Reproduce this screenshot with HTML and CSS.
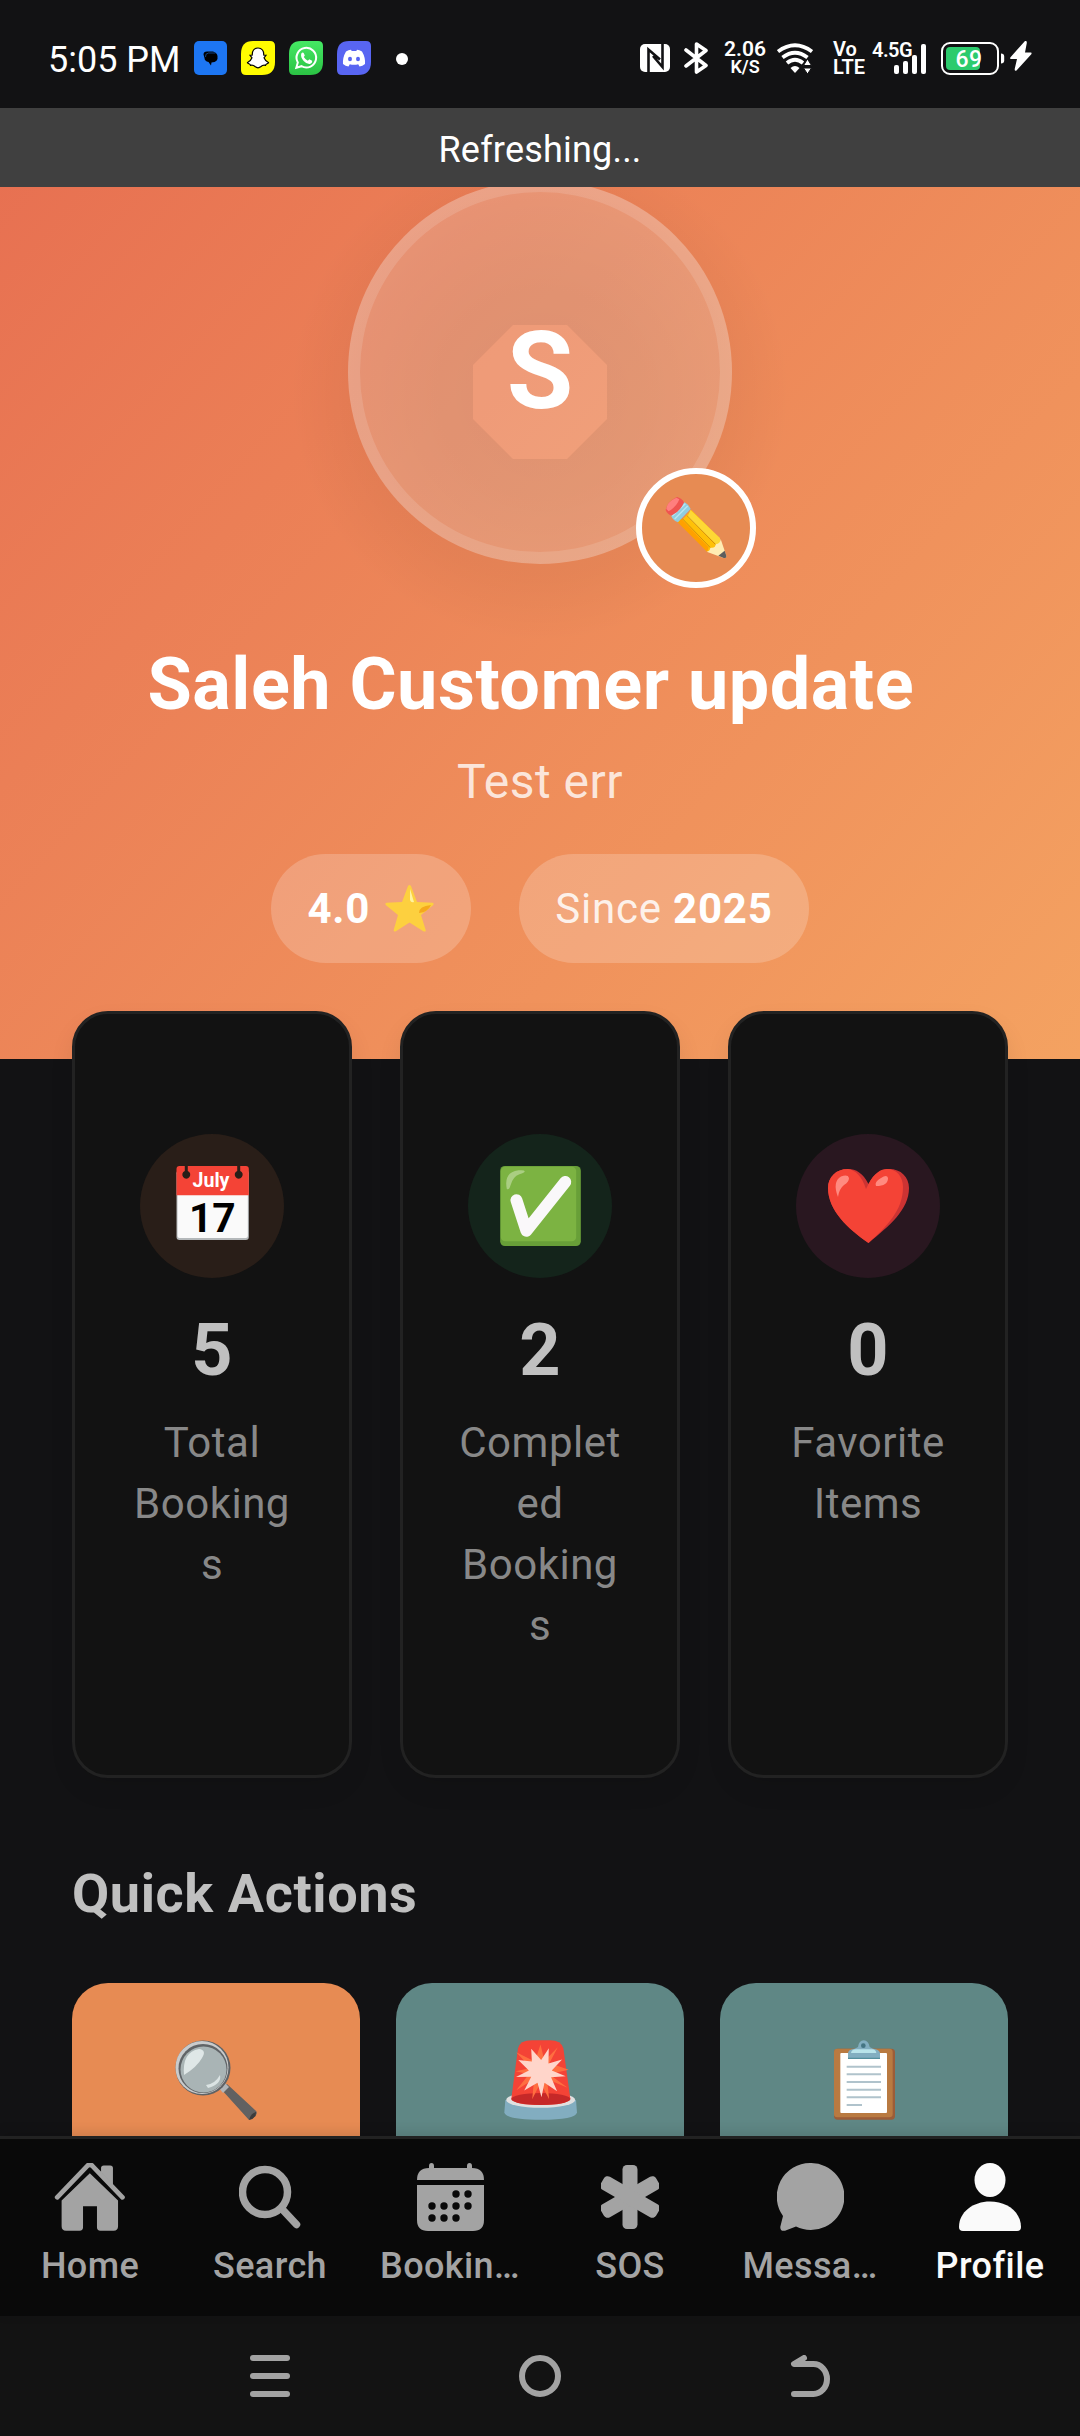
FILE: index.html
```html
<!DOCTYPE html>
<html lang="en">
<head>
<meta charset="utf-8">
<title>Profile</title>
<link rel="stylesheet" href="styles.css">
</head>
<body>
<div class="app">
  <header class="status">
    <span class="time">5:05 PM</span>
    <div class="notifs">
      <svg width="33" height="34" viewBox="0 0 33 34"><rect width="33" height="34" rx="5" fill="#1d76f3"/><path d="M9.500 13.500q0-3 3.500-3h6q4 1 4.500 4.500 1 6-6 6.500l-.5 3-2.500-3.500q-4-1-4-4z" fill="#000"/><path d="M11.500 16q-.5-3.500 3-4h7" fill="none" stroke="#1550a0" stroke-width=".8"/></svg>
      <svg width="34" height="34" viewBox="0 0 34 34"><path d="M12 0h17q5 0 5 5v16q0 13-13 13H5q-5 0-5-5V13Q0 0 12 0z" fill="#fffc00"/><path d="M17 7c-4 0-6 3-5.700 7l-2.300.3 2 2.500c-1 2.500-2.500 4-4.500 4.700.5 1.500 2.500 1 3 2.800 2-.5 3.500.2 4.500 1.200 2 1.700 4 1.700 6 0 1-1 2.500-1.700 4.500-1.200.5-1.800 2.500-1.300 3-2.800-2-.7-3.500-2.200-4.500-4.700l2-2.500-2.300-.3C23 10 21 7 17 7z" fill="#fff" stroke="#000" stroke-width="1.200"/></svg>
      <svg width="34" height="34" viewBox="0 0 34 34"><defs><linearGradient id="wa" x2="0" y2="1"><stop stop-color="#45e864"/><stop offset="1" stop-color="#2bc244"/></linearGradient></defs><path d="M12 0h17q5 0 5 5v16q0 13-13 13H5q-5 0-5-5V13Q0 0 12 0z" fill="url(#wa)"/><path d="M7.300 26.700l1.500-5.200a9.800 9.800 0 1 1 3.700 3.700z" fill="none" stroke="#fff" stroke-width="2"/><path d="M12.300 12.500q1.500-1.800 2.500-.3l1 2.400-1 1.500q1.500 2.500 4 3.700l1.500-1.500 2.800 1.400q.5 2.500-2.400 3.200-3 .3-6-3-3.500-3.700-2.400-7.400z" fill="#fff"/></svg>
      <svg width="34" height="34" viewBox="0 0 34 34"><path d="M12 0h17q5 0 5 5v16q0 13-13 13H5q-5 0-5-5V13Q0 0 12 0z" fill="#5865f2"/><path d="M9 10.500q2.500-1.500 5-1.800l.7 1.300h4.600l.7-1.300q2.500.3 5 1.800 3.500 6 3 12.500-2.500 2-5.500 2.500l-1.300-2.300q-4.200 1.200-8.400 0l-1.300 2.300Q8.500 25 6 23q-.5-6.500 3-12.500z" fill="#fff"/><ellipse cx="13" cy="18" rx="2" ry="2.200" fill="#5865f2"/><ellipse cx="21" cy="18" rx="2" ry="2.200" fill="#5865f2"/></svg>
      <i class="dot"></i>
    </div>
    <div class="system">
      <svg class="nfc" width="30" height="28" viewBox="0 0 30 28"><rect width="30" height="28" rx="5" fill="#fff"/><path d="M8.500 28V5.500L20 15.500M13 12l9.500 11V0" fill="none" stroke="#121214" stroke-width="2.600"/></svg>
      <svg class="bt" width="25" height="32" viewBox="0 0 25 32"><path d="M2 8l20 15.500-9.500 6.500V2L22 8.500 2 24" fill="none" stroke="#fff" stroke-width="3.600" stroke-linejoin="round" stroke-linecap="round"/></svg>
      <span class="duo speed"><b>2.06</b><b class="unit">K/S</b></span>
      <svg class="wifi" width="36" height="31" viewBox="0 0 36 31"><g fill="none" stroke="#fff" stroke-width="3.800"><path d="M1 8.500q17-12.500 34 0M5.500 14.500q12.500-9.500 25 0M10 20q8-6.500 16 0"/></g><path d="M13.500 25q4.500-4 9 0L18 30z" fill="#fff"/><path d="M30.500 16l4 6.500h-8zM30.500 31l4-6h-8z" fill="#fff" stroke="#121214" stroke-width="1"/></svg>
      <span class="duo volte"><b>Vo</b><b>LTE</b></span>
      <span class="signal"><b>4.5G</b><svg width="32" height="30" viewBox="0 0 32 30" fill="#fff"><rect y="21" width="5" height="9" rx="2"/><rect x="9" y="17" width="5" height="13" rx="2"/><rect x="18" y="11" width="5" height="19" rx="2"/><rect x="27" y="0" width="5" height="30" rx="2"/></svg></span>
      <svg class="battery" width="64" height="33" viewBox="0 0 64 33"><rect x="1" y="1" width="56" height="31" rx="8" fill="none" stroke="#fff" stroke-width="2"/><path d="M9 5h26q4 0 4 4v15q0 4-4 4H9q-4 0-4-4V9q0-4 4-4z" fill="#2ccb6d"/><path d="M60 11.500q3.200 0 3.200 3v4q0 3-3.200 3z" fill="#fff"/><text x="28" y="25" text-anchor="middle" class="pct">69</text></svg>
      <svg class="bolt" width="22" height="30" viewBox="0 0 22 30"><path d="M15 0q2-.5 1.800 2L15 11.500h6q1 .5.300 1.800L6.500 29.500q-2 .7-1.800-1.500L7 18H.8q-1.200-.5-.3-1.800z" fill="#fff"/></svg>
    </div>
  </header>

  <main class="screen">
    <div class="refresh">Refreshing...</div>

    <section class="hero">
      <div class="avatar">
        <span class="initial">S</span>
        <div class="edit">
          <svg width="62" height="62" viewBox="1036 952 186 186"><path d="M1089 1019l26-28 82 82 6 33-40 10-88-90z" fill="#ffc107"/><path d="M1112 991l89 84 1 18-10 3-88-84z" fill="#fdd835"/><path d="M1071 1025l14-8 82 86-4 14z" fill="#ffa000"/><path d="M1088 1017l84 87M1102 1008l86 87" stroke="#bf7512" stroke-width="2" fill="none"/><path d="M1203 1078l17 50q1 8-8 7l-51-19q10-2 11-12 15 3 16-10 14-1 15-16z" fill="#ffecb3"/><path d="M1215 1113l5 15q1 8-8 7l-16-7z" fill="#5d5d5d"/><path d="M1053 1006l42-38q13 7 18 20l-38 40q-15-5-22-22z" fill="#90cde0"/><path d="M1065 1018l39-39M1058 1009l39-37" stroke="#b7e7f2" stroke-width="4"/><path d="M1038 991q5-25 34-39 13 3 21 16-10 27-38 40-12-4-17-17z" fill="#ef5350"/><path d="M1040 988q2-22 30-34l9 5q-8 22-32 36z" fill="#ff7f7e"/></svg>
        </div>
      </div>
      <h1 class="name">Saleh Customer update&nbsp;</h1>
      <p class="bio">Test err</p>
      <div class="pills">
        <span class="pill"><b>4.0</b><svg class="star" width="49" height="47" viewBox="0 0 49 47"><path d="M23 1q1.500-2 3 0l6 16 15.500.7q2 .8.500 2.500L36 30l4.700 15q.3 2-2 1.500L24.500 37.500 10.500 46.500q-2 .5-1.800-1.500L13 30 1 20.200q-1.500-1.700.5-2.500L17 17z" fill="#fdd03f"/><path d="M25 4l4 13q-3 1-4-2z" fill="#fff3a0"/><path d="M46 20q-3 7-12 8 0-7 12-8z" fill="#f5a91c"/></svg></span>
        <span class="pill">Since&nbsp;<b>2025</b></span>
      </div>
    </section>

    <section class="stats">
      <article class="stat">
        <div class="badge amber"><svg width="73" height="74" viewBox="135 107 219 223"><rect x="136" y="120" width="218" height="210" rx="9" fill="#b4b8ba"/><rect x="139" y="160" width="212" height="164" rx="6" fill="#fafafa"/><path d="M136 195v-79q0-9 9-9h200q9 0 9 9v79z" fill="#f44336"/><path d="M161 107h9v15a12 12 0 1 1-9 0zM319 107h9v15a12 12 0 1 1-9 0z" fill="#291e18"/><text x="240" y="171" text-anchor="middle" class="cal-month">July</text><text x="244" y="306" text-anchor="middle" class="cal-day">17</text></svg></div>
        <strong class="num">5</strong>
        <span class="label">Total Bookings</span>
      </article>
      <article class="stat">
        <div class="badge green"><svg width="81" height="80" viewBox="1107 107 243 241"><rect x="1107" y="107" width="243" height="241" rx="14" fill="#689f38"/><rect x="1109" y="109" width="227" height="225" rx="13" fill="#7cb342"/><path d="M1127 176q-10-50 35-56 18-2 19 3 0 4-16 9-20 7-27 34-4 15-11 10z" fill="#aace82"/><path d="M1156 210l30 92 117-147" fill="none" stroke="#faf8fa" stroke-width="36" stroke-linecap="round" stroke-linejoin="round"/></svg></div>
        <strong class="num">2</strong>
        <span class="label">Completed Bookings</span>
      </article>
      <article class="stat">
        <div class="badge rose"><svg width="81" height="74" viewBox="0 0 81 74"><path d="M40.500 15C46 4 54 0 61 0c12 0 20 8 20 19 0 22-20 38-40.500 55C20 60 0 41 0 19 0 8 8 0 20 0c8 0 15 4 20.500 15z" fill="#cc3333"/><path d="M38 20l2.500-5C46 4 53 0 59 0c10 0 16 8 16 18 0 24-17 40-34.500 56C20 60 0 41 0 19 0 8 8 0 20 0c7 1 14 7 18 20z" fill="#f44336"/><path d="M10 28Q4 13 13 7.500 20 5 21 9q0 4-5 7-5 4-6 12zM48 17q-2-4 5-8 6-4 7 0 0 8-12 8z" fill="#ff8a80"/></svg></div>
        <strong class="num">0</strong>
        <span class="label">Favorite Items</span>
      </article>
    </section>

    <h2 class="title">Quick Actions</h2>
    <section class="tiles">
      <article class="tile orange"><svg width="82" height="80" viewBox="0 0 82 80"><path d="M46 49l6-5 28 26q3 2 1 5-3 4-7 5z" fill="#616161"/><path d="M74 80q2-7 7-8l-.5 4q-2 3-6.500 4z" fill="#3c3c3c"/><path d="M44 48l6-5 4 4-6 6z" fill="#b0b4b8"/><circle cx="28" cy="28" r="27.500" fill="#5e6265"/><circle cx="27" cy="27.500" r="26.500" fill="#c9cbcc"/><circle cx="28" cy="28.500" r="24.500" fill="#606467"/><circle cx="28.500" cy="29.500" r="23" fill="#a9b4b5"/><path d="M9 35Q7 12 24 9q8 1 3 9-5 9-18 17z" fill="#dfe7e7"/><path d="M31 45q9-1 14-10 2 9-12 13z" fill="#dbe4e4"/></svg></article>
      <article class="tile teal"><svg width="73" height="80" viewBox="38 45 220 240"><path d="M42 225h213l3 38q-5 22-109 22T39 263z" fill="#82adc0"/><ellipse cx="148.500" cy="225" rx="104" ry="24" fill="#e0e0e0"/><path d="M60 222L80 70q5-25 42-25h54q35 0 41 25l21 152q-10 18-89 18t-89-18z" fill="#f44336"/><ellipse cx="149" cy="222" rx="89" ry="18" fill="#c62828"/><path d="M148 58l12 50 40-42-25 48 58 20-59 14 56 40-62-25 6 60-26-50-25 50 6-62-54 35 38-48-40-9 46-10-44-48 56 28z" fill="#ff6e40"/><path d="M120 71l30 34 23-36-1 46 41-12-31 33 42 18-44 3 18 42-38-26-9 44-12-44-40 24 21-42-46 1 39-20-32-31 41 4z" fill="#ffd5ca"/></svg></article>
      <article class="tile teal"><svg width="61" height="80" viewBox="1029 43 183 240"><rect x="1029" y="69" width="183" height="213" rx="11" fill="#9c5d38"/><rect x="1029" y="69" width="176" height="206" rx="10" fill="#b97a41"/><rect x="1048" y="82" width="140" height="180" rx="3" fill="#fff"/><path d="M1067 123h103M1067 146h103M1067 169h103M1067 192h103M1067 215h103M1067 238h46" stroke="#b0c3cc" stroke-width="6"/><path d="M1071 98V82q2-12 20-13l10-5q3-20 17-20t18 20l10 5q18 1 21 13v16z" fill="#82aec0"/><path d="M1080 82q2-11 14-11h50q10 0 12 11z" fill="#b9e4ea"/><circle cx="1117" cy="60" r="7" fill="#447583"/><path d="M1071 98h96" stroke="#387d8c" stroke-width="3"/></svg></article>
    </section>
  </main>

  <nav class="tabs">
    <a class="tab"><svg width="72" height="68" viewBox="160 128 207 200"><path d="M167 229l88-92q8-8 16 0l88 92" fill="none" stroke="currentColor" stroke-width="14" stroke-linecap="round"/><path d="M296 156v-13q0-8 8-8h19q8 0 8 8v50z" fill="currentColor"/><path d="M263 158l83 80v76q0 13-13 13h-39q-10 0-10-10v-62h-41v62q0 10-10 10h-40q-13 0-13-13v-76z" fill="currentColor"/></svg><span>Home</span></a>
    <a class="tab"><svg width="62" height="68" viewBox="0 0 62 68" fill="none" stroke="currentColor"><circle cx="26" cy="29" r="22.500" stroke-width="7.500"/><path d="M43 46l14.500 15.500" stroke-width="7.500" stroke-linecap="round"/></svg><span>Search</span></a>
    <a class="tab"><svg width="67" height="68" viewBox="0 0 67 68"><path fill="currentColor" d="M12 3q0-3 2.500-3T17 3v2h33V3q0-3 2.500-3T55 3v2q12 0 12 12H0Q0 5 12 5zM0 22h67v35q0 11-11 11H11Q0 68 0 57z"/><g fill="#090909"><circle cx="39" cy="31" r="3.700"/><circle cx="51" cy="31" r="3.700"/><circle cx="15" cy="43" r="3.700"/><circle cx="27" cy="43" r="3.700"/><circle cx="39" cy="43" r="3.700"/><circle cx="51" cy="43" r="3.700"/><circle cx="15" cy="55" r="3.700"/><circle cx="27" cy="55" r="3.700"/><circle cx="39" cy="55" r="3.700"/></g></svg><span>Bookin…</span></a>
    <a class="tab"><svg width="58" height="68" viewBox="0 0 58 68"><g fill="currentColor"><rect x="21.500" y="2" width="15" height="64" rx="4.500"/><rect x="21.500" y="2" width="15" height="64" rx="4.500" transform="rotate(60 29 34)"/><rect x="21.500" y="2" width="15" height="64" rx="4.500" transform="rotate(-60 29 34)"/></g></svg><span>SOS</span></a>
    <a class="tab"><svg width="67" height="68" viewBox="0 0 67 68"><path fill="currentColor" d="M33.500 0a33.500 33.500 0 1 1-14.500 63.500L8 67.700q-5 1-4.700-4L6 53A33.500 33.500 0 0 1 33.500 0z"/></svg><span>Messa…</span></a>
    <a class="tab active"><svg width="62" height="68" viewBox="0 0 62 68" fill="currentColor"><ellipse cx="31" cy="17" rx="15.500" ry="17"/><path d="M4 68q-4 0-4-4C0 49 14 38.500 31 38.500S62 49 62 64q0 4-4 4z"/></svg><span>Profile</span></a>
  </nav>

  <footer class="sysnav">
    <svg width="40" height="42" viewBox="0 0 40 42" fill="#a3a3a3"><rect width="40" height="6" rx="3"/><rect y="18" width="40" height="6" rx="3"/><rect y="36" width="40" height="6" rx="3"/></svg>
    <svg width="42" height="42" viewBox="0 0 42 42" fill="none" stroke="#a3a3a3" stroke-width="6"><circle cx="21" cy="21" r="18"/></svg>
    <svg width="40" height="42" viewBox="0 0 40 42" fill="none" stroke="#a3a3a3" stroke-width="6" stroke-linecap="round" stroke-linejoin="round"><path d="M14 3L4 9h19.500a13.500 15 0 0 1 0 30H4"/></svg>
  </footer>
</div>
</body>
</html>
```
FILE: styles.css
```css
* { box-sizing: border-box; }
body { margin: 0; background: #121214; font-family: Roboto, "Noto Sans", sans-serif; }
h1, h2, p { margin: 0; }
svg { display: block; flex: none; }

.app { width: 1080px; height: 2436px; display: flex; flex-direction: column; overflow: hidden; background: #121214; color: #fff; }

.status { height: 108px; flex: none; display: flex; align-items: center; padding: 8px 48px 0 48px; }
.time { width: 145.500px; font-size: 36px; line-height: 42px; padding-top: 3px; white-space: nowrap; }
.notifs { display: flex; align-items: center; gap: 14px; }
.dot { width: 12px; height: 12px; border-radius: 50%; background: #fff; margin-left: 11px; margin-top: 1px; }
.system { margin-left: auto; display: flex; align-items: center; }
.bt { margin-left: 14px; }
.duo { display: flex; flex-direction: column; justify-content: center; font-size: 20px; line-height: 18px; }
.duo b, .signal b { font-weight: 600; }
.speed { align-items: center; width: 40px; margin-left: 16px; font-size: 21px; }
.speed .unit { font-size: 18px; }
.wifi { margin-left: 12px; }
.volte { width: 30px; margin-left: 20px; }
.signal { position: relative; width: 54px; height: 32px; margin-left: 9px; display: flex; align-items: flex-end; justify-content: flex-end; font-size: 20px; line-height: 18px; }
.signal b { position: absolute; left: 0; top: -1px; letter-spacing: -.5px; }
.battery { margin-left: 15px; }
.pct { font: 500 23px Roboto, sans-serif; fill: #fff; letter-spacing: .5px; }
.bolt { margin-left: 5px; margin-top: -4px; }

.screen { position: relative; height: 2028px; flex: none; overflow: hidden; }
.refresh { position: absolute; z-index: 2; left: 0; right: 0; top: 0; height: 79px; background: #404040; text-align: center; font-size: 36px; line-height: 84px; letter-spacing: .2px; }

.hero { height: 951px; padding-top: 72px; display: flex; flex-direction: column; align-items: center; background: linear-gradient(131.400deg, #e76f51, #f4a261); }
.avatar { position: relative; width: 384px; height: 384px; border-radius: 50%; border: 12px solid rgba(255,255,255,.14); background: rgba(255,255,255,.2); display: flex; align-items: center; justify-content: center; }
.avatar::before { content: ""; position: absolute; left: -92px; top: -72px; width: 544px; height: 544px; background: radial-gradient(circle 250px, rgba(0,0,0,.07), rgba(0,0,0,.06) 40%, rgba(0,0,0,.035) 75%, transparent); clip-path: path(evenodd, "M0 0H544V544H0ZM245 205H299L339 245V299L299 339H245L205 299V245Z"); }
.initial { position: relative; font-size: 108px; font-weight: 700; line-height: 126px; margin-top: -2px; }
.edit { position: absolute; left: 276px; top: 276px; width: 120px; height: 120px; border: 6px solid #fff; border-radius: 50%; background: #e78b53; display: flex; align-items: center; justify-content: center; }
.name { margin-top: 79px; font-size: 72px; line-height: 84px; font-weight: 700; white-space: nowrap; letter-spacing: .5px; }
.bio { margin-top: 27px; font-size: 48px; line-height: 56px; letter-spacing: .5px; color: rgba(255,255,255,.8); }
.pills { margin-top: 44px; display: flex; gap: 48px; }
.pill { height: 109px; padding: 0 36px; border-radius: 54.500px; background: rgba(255,255,255,.2); display: flex; align-items: center; font-size: 42px; letter-spacing: .8px; color: rgba(255,255,255,.85); }
.pill b { color: #fff; font-weight: 700; }
.star { margin-left: 15px; margin-right: 1px; }

.stats { position: relative; margin-top: -48px; padding: 0 72px; display: grid; grid-template-columns: repeat(3, 1fr); gap: 48px; height: 767px; }
.stat { min-width: 0; border: 3px solid #222; border-radius: 36px; background: #121212; padding: 120px 54px 0; display: flex; flex-direction: column; align-items: center; box-shadow: 0 12px 24px rgba(0,0,0,.08); }
.badge { flex: none; width: 144px; height: 144px; border-radius: 50%; display: flex; align-items: center; justify-content: center; }
.amber { background: #291e18; }
.amber svg { margin-top: -6px; }
.green { background: #14241b; }
.rose { background: #291720; }
.cal-month { font: 700 59px Roboto, sans-serif; fill: #fff; }
.cal-day { font: 700 123px Roboto, sans-serif; fill: #000; }
.num { margin-top: 31px; font-size: 72px; line-height: 84px; font-weight: 700; color: #c0c0c0; }
.label { margin-top: 19px; width: 168px; text-align: center; font-size: 42px; line-height: 61px; letter-spacing: .5px; color: #888; overflow-wrap: anywhere; }

.title { margin: 84px 72px 0; font-size: 54px; line-height: 64px; font-weight: 700; letter-spacing: .6px; color: #c0c0c0; }
.tiles { margin: 57px 72px 0; display: flex; gap: 36px; }
.tile { width: 288px; height: 288px; flex: none; border-radius: 36px; padding-top: 57px; display: flex; justify-content: center; align-items: flex-start; }
.orange { background: #e78b53; }
.teal { background: #5f8785; }

.tabs { height: 180px; flex: none; border-top: 3px solid #222; background: #090909; display: grid; grid-template-columns: repeat(6, 180px); box-shadow: 0 -3px 12px rgba(0,0,0,.12); position: relative; }
.tab { display: flex; flex-direction: column; align-items: center; padding-top: 24px; color: #a3a3a3; font-size: 36px; line-height: 42px; font-weight: 500; letter-spacing: .4px; }
.tab span { margin-top: 14px; }
.tab.active { color: #fafafa; }
.sysnav { height: 120px; background: #131313; display: flex; justify-content: center; align-items: center; gap: 229px; }
```
